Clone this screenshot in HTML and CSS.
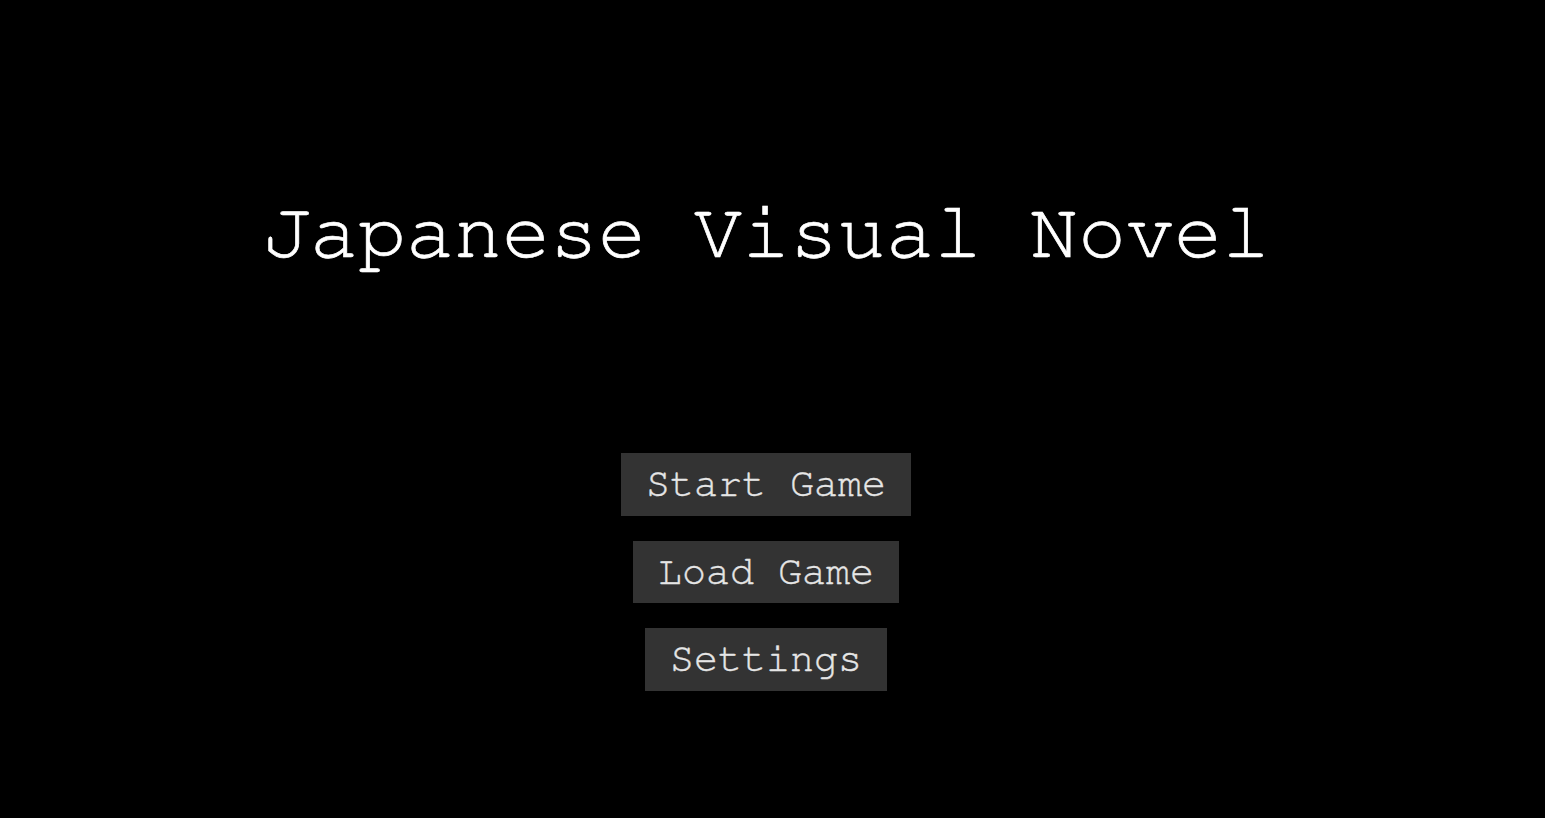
FILE: index.html
```html
<!DOCTYPE html>
<html lang="en">
<head>
<meta charset="utf-8">
<title>Japanese Visual Novel</title>
<link rel="stylesheet" href="styles.css">
</head>
<body>
<main class="menu">
  <h1 class="title">Japanese Visual Novel</h1>
  <nav class="buttons">
    <button class="btn">Start Game</button>
    <button class="btn">Load Game</button>
    <button class="btn">Settings</button>
  </nav>
</main>
</body>
</html>
```
FILE: styles.css
```css
html, body {
  margin: 0;
  padding: 0;
  background: #000;
  height: 100%;
}
body {
  font-family: FreeMono, "Courier New", monospace;
  color: #fff;
}
.menu {
  display: flex;
  flex-direction: column;
  align-items: center;
  padding: 0 13px 0 0;
}
.title {
  margin: 188px 0 0 0;
  font-size: 80px;
  font-weight: normal;
  line-height: 90px;
  -webkit-text-stroke: 0.7px #fff;
}
.buttons {
  display: flex;
  flex-direction: column;
  align-items: center;
  gap: 25px;
  margin-top: 175px;
}
.btn {
  font-family: FreeMono, "Courier New", monospace;
  font-size: 40px;
  line-height: 46.5px;
  padding: 8px 25px;
  background: #333;
  color: #e6e6e6;
  border: none;
  cursor: pointer;
  -webkit-text-stroke: 0.4px #e6e6e6;
}
```
